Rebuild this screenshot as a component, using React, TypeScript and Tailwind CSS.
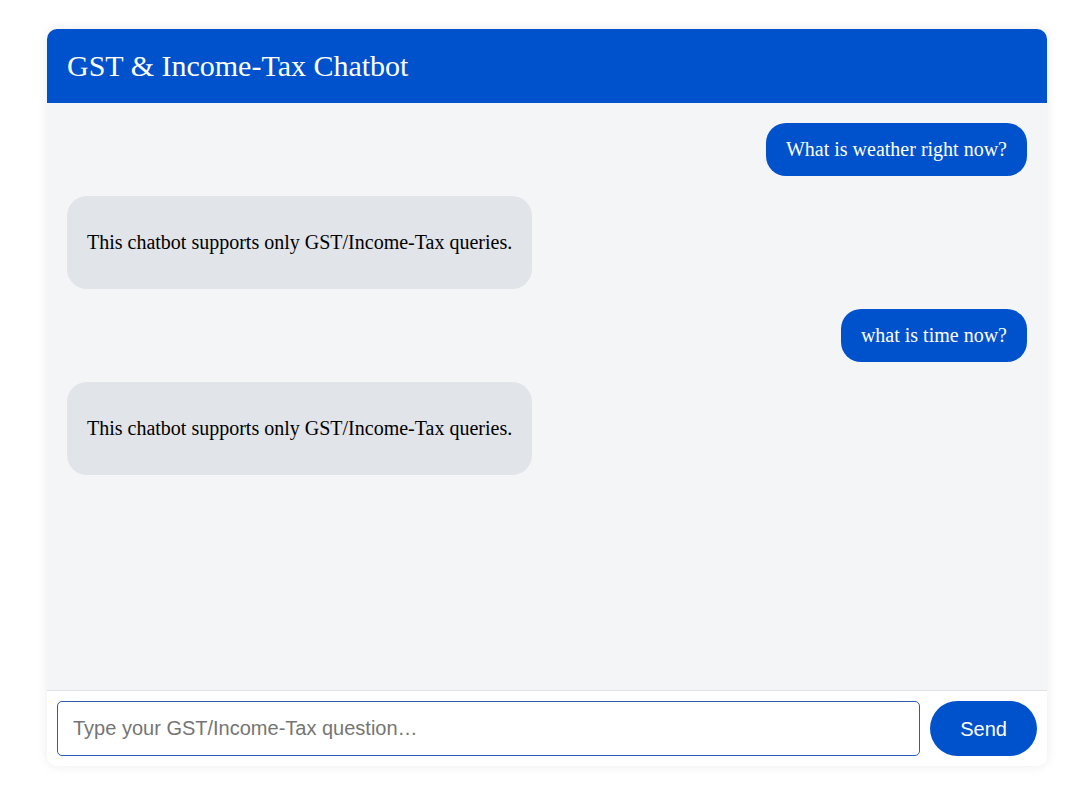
const messages = [
  { from: "user", text: "What is weather right now?" },
  { from: "bot", text: "This chatbot supports only GST/Income-Tax queries." },
  { from: "user", text: "what is time now?" },
  { from: "bot", text: "This chatbot supports only GST/Income-Tax queries." },
];

export default function App() {
  return (
    <div className="min-h-[807px] bg-white pt-[29px] pl-[47px]">
      <div className="flex h-[737px] w-[1000px] flex-col overflow-hidden rounded-[10px] bg-white shadow-[0_0_12px_rgba(0,0,0,0.08)]">
        <header className="bg-[#0052cc] px-5 py-5">
          <h1 className="text-[30px] leading-[34px] text-white font-['Liberation_Serif',serif]">
            GST &amp; Income-Tax Chatbot
          </h1>
        </header>

        <div className="flex flex-1 flex-col gap-5 bg-[#f4f5f7] p-5 font-['Liberation_Serif',serif] text-[20px] leading-[23px]">
          {messages.map((m, i) =>
            m.from === "user" ? (
              <div
                key={i}
                className="self-end rounded-[20px] bg-[#0052cc] px-5 py-[15px] text-white"
              >
                {m.text}
              </div>
            ) : (
              <div
                key={i}
                className="self-start rounded-[20px] bg-[#e1e4e9] px-5 py-[15px] text-black"
              >
                <p className="my-5">{m.text}</p>
              </div>
            )
          )}
        </div>

        <div className="flex gap-[10px] border-t border-[#dfe1e5] bg-white p-[10px] font-['Liberation_Sans',sans-serif]">
          <input
            type="text"
            placeholder="Type your GST/Income-Tax question…"
            className="h-[55px] flex-1 rounded-[5px] border border-[#2a5cb8] px-[15px] text-[20px] text-black placeholder:text-[#757575] focus:outline-none"
          />
          <button
            type="button"
            className="h-[55px] rounded-[28px] bg-[#0052cc] px-[30px] text-[20px] text-white"
          >
            Send
          </button>
        </div>
      </div>
    </div>
  );
}
